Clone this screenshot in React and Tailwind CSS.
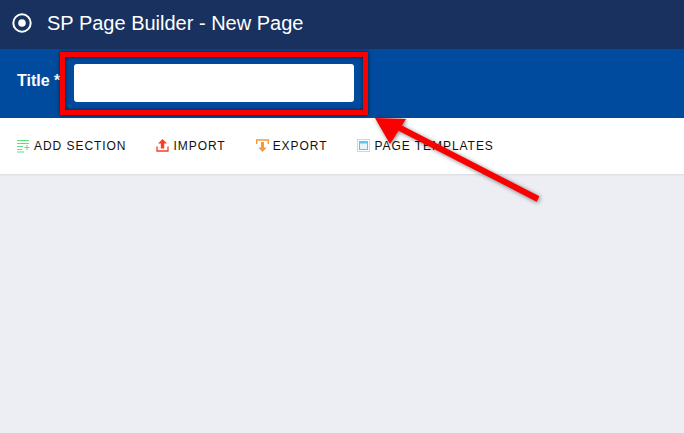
import React from 'react';

function AddSectionIcon() {
  return (
    <svg width="13" height="14" viewBox="0 0 13 14" fill="none" stroke="#5fe07f" strokeWidth="1">
      <path d="M0 1.5h12M0 4.5h12M0 7.5h6M0 10.5h5M0 13h7M7.5 8.5h5M10 6v5" />
    </svg>
  );
}

function ImportIcon() {
  return (
    <svg width="13" height="13" viewBox="0 0 13 13" fill="none">
      <path d="M6.5 0L11 4.5H8.2V9.5H4.8V4.5H2z" fill="#ff3b24" />
      <path d="M1 7.5v4.5h11V7.5" stroke="#ff3b24" strokeWidth="1.3" />
    </svg>
  );
}

function ExportIcon() {
  return (
    <svg width="13" height="14" viewBox="0 0 13 14" fill="none">
      <path d="M0.7 5V1h11.6v4" stroke="#f79a3e" strokeWidth="1.4" />
      <path d="M5 3h3v5.5h2.8l-4.3 4.5-4.3-4.5H5z" fill="#f79a3e" />
    </svg>
  );
}

function TemplatesIcon() {
  return (
    <svg width="13" height="13" viewBox="0 0 13 13" fill="none">
      <rect x="0.5" y="0.5" width="12" height="12" stroke="#5cc4f5" strokeDasharray="1 1" />
      <rect x="2.5" y="2.5" width="8" height="8" stroke="#5cc4f5" fill="#e4f5fd" />
      <path d="M2.5 3.5h8" stroke="#5cc4f5" strokeWidth="2" />
    </svg>
  );
}

export default function App() {
  const tools = [
    { name: 'ADD SECTION', icon: AddSectionIcon },
    { name: 'IMPORT', icon: ImportIcon },
    { name: 'EXPORT', icon: ExportIcon },
    { name: 'PAGE TEMPLATES', icon: TemplatesIcon },
  ];

  return (
    <div className="relative flex h-[433px] w-[684px] flex-col overflow-hidden bg-[#edeef3] font-['Liberation_Sans',sans-serif]">
      <header className="flex h-[49px] items-center bg-[#19315f] pl-3 text-white">
        <svg width="20" height="20" viewBox="0 0 20 20" fill="none" className="mb-1">
          <circle cx="10" cy="10" r="8.7" stroke="white" strokeWidth="2" />
          <circle cx="10" cy="10" r="3.8" fill="white" />
        </svg>
        <h1 className="ml-[15px] mb-[4px] text-[20px]">SP Page Builder - New Page</h1>
      </header>

      <div className="flex h-[69px] items-center bg-[#004b9d] pl-[17px]">
        <label className="mb-[5px] w-[57px] text-base font-bold text-white">Title *</label>
        <input className="mb-[1px] h-[38px] w-[280px] rounded-[3px] bg-white" />
      </div>

      <div className="flex h-[56px] items-center bg-white pb-[1px] pl-[17px] shadow-[0_1px_2px_rgba(0,0,0,0.08)]">
        {tools.map((tool) => {
          const Icon = tool.icon;
          return (
            <div key={tool.name} className="mr-[30px] flex items-center gap-1 text-xs font-normal tracking-[0.95px] text-[#111]">
              <Icon />
              {tool.name}
            </div>
          );
        })}
      </div>

      {/* Annotation drawn over the screenshot */}
      <div className="absolute left-[60px] top-[52px] h-[63px] w-[308px] border-[5px] border-[#fa0000] shadow-[0_0_4px_rgba(0,0,0,0.6),inset_0_0_4px_rgba(0,0,0,0.6)]" />
      <svg width="684" height="433" className="pointer-events-none absolute left-0 top-0 drop-shadow-[1px_1px_2px_rgba(0,0,0,0.5)]">
        <path d="M538 199L398 127" stroke="#fa0000" strokeWidth="6" />
        <path d="M375 118L406 119L390 144Z" fill="#fa0000" />
      </svg>
    </div>
  );
}
